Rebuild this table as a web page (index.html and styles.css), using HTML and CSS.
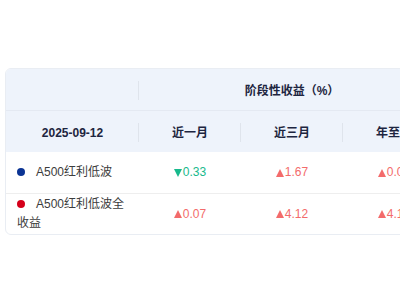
FILE: index.html
```html
<!DOCTYPE html>
<html lang="zh-CN">
<head>
<meta charset="utf-8">
<title>阶段性收益</title>
<link rel="stylesheet" href="styles.css">
</head>
<body>
<div class="page">
  <div class="tbl">
    <div class="th h1 sep"></div>
    <div class="th h1 group">阶段性收益（%）</div>

    <div class="th h2 sep">2025-09-12</div>
    <div class="th h2 sep">近一月</div>
    <div class="th h2 sep">近三月</div>
    <div class="th h2">年至今</div>

    <div class="td name r1"><span class="dot navy"></span>A500红利低波</div>
    <div class="td val r1 down"><span class="tri-down"></span>0.33</div>
    <div class="td val r1 up"><span class="tri-up"></span>1.67</div>
    <div class="td val r1 up"><span class="tri-up"></span>0.06</div>

    <div class="td name r2"><span class="dot red"></span>A500红利低波全收益</div>
    <div class="td val r2 up"><span class="tri-up"></span>0.07</div>
    <div class="td val r2 up"><span class="tri-up"></span>4.12</div>
    <div class="td val r2 up"><span class="tri-up"></span>4.15</div>
  </div>
</div>
</body>
</html>
```

FILE: styles.css
```css
html, body {
  margin: 0;
  padding: 0;
  background: #ffffff;
  overflow: hidden;
}

body {
  font-family: "Liberation Sans", "Noto Sans CJK SC", sans-serif;
  font-size: 12px;
  line-height: 19px;
  color: #3a3a3a;
}

.page {
  padding: 68px 0 0 5px;
}

.tbl {
  display: grid;
  grid-template-columns: 133px 102px 102px 102px;
  width: max-content;
  border: 1px solid #e9edf3;
  border-radius: 6px;
  overflow: hidden;
}

.th {
  position: relative;
  background: #eef3fb;
  color: #1d2540;
  font-weight: 700;
  display: flex;
  align-items: center;
  justify-content: center;
  box-sizing: border-box;
}

.h1 {
  height: 42px;
  border-bottom: 1px solid #e4e9f2;
  padding-top: 4px;
}

.h2 {
  height: 41px;
  padding-top: 4px;
}

.group {
  grid-column: 2 / span 3;
}

.sep::after {
  content: "";
  position: absolute;
  right: 0;
  top: 50%;
  width: 1px;
  height: 19px;
  margin-top: -9px;
  background: #dfe4ec;
}

.td {
  box-sizing: border-box;
  display: flex;
  align-items: center;
}

.r1 {
  height: 42px;
  border-bottom: 1px solid #eeeeee;
}

.r2 {
  height: 40px;
}

.name {
  display: block;
  padding: 0 11px;
  color: #3c3c3c;
}

.name.r1 {
  padding-top: 11px;
}

.name.r2 {
  padding-top: 1px;
}

.dot {
  display: inline-block;
  width: 8px;
  height: 8px;
  border-radius: 50%;
  margin-right: 11px;
  vertical-align: 0;
}

.navy { background: #0b3494; }
.red { background: #d5001a; }

.val {
  justify-content: center;
}

.up { color: #f36b6b; }
.down { color: #17b98c; }

.tri-up,
.tri-down {
  display: inline-block;
  width: 0;
  height: 0;
  border-left: 4px solid transparent;
  border-right: 4px solid transparent;
  margin-right: 1px;
}

.tri-up {
  border-bottom: 8px solid #f36b6b;
}

.tri-down {
  border-top: 8px solid #17b98c;
}
```
